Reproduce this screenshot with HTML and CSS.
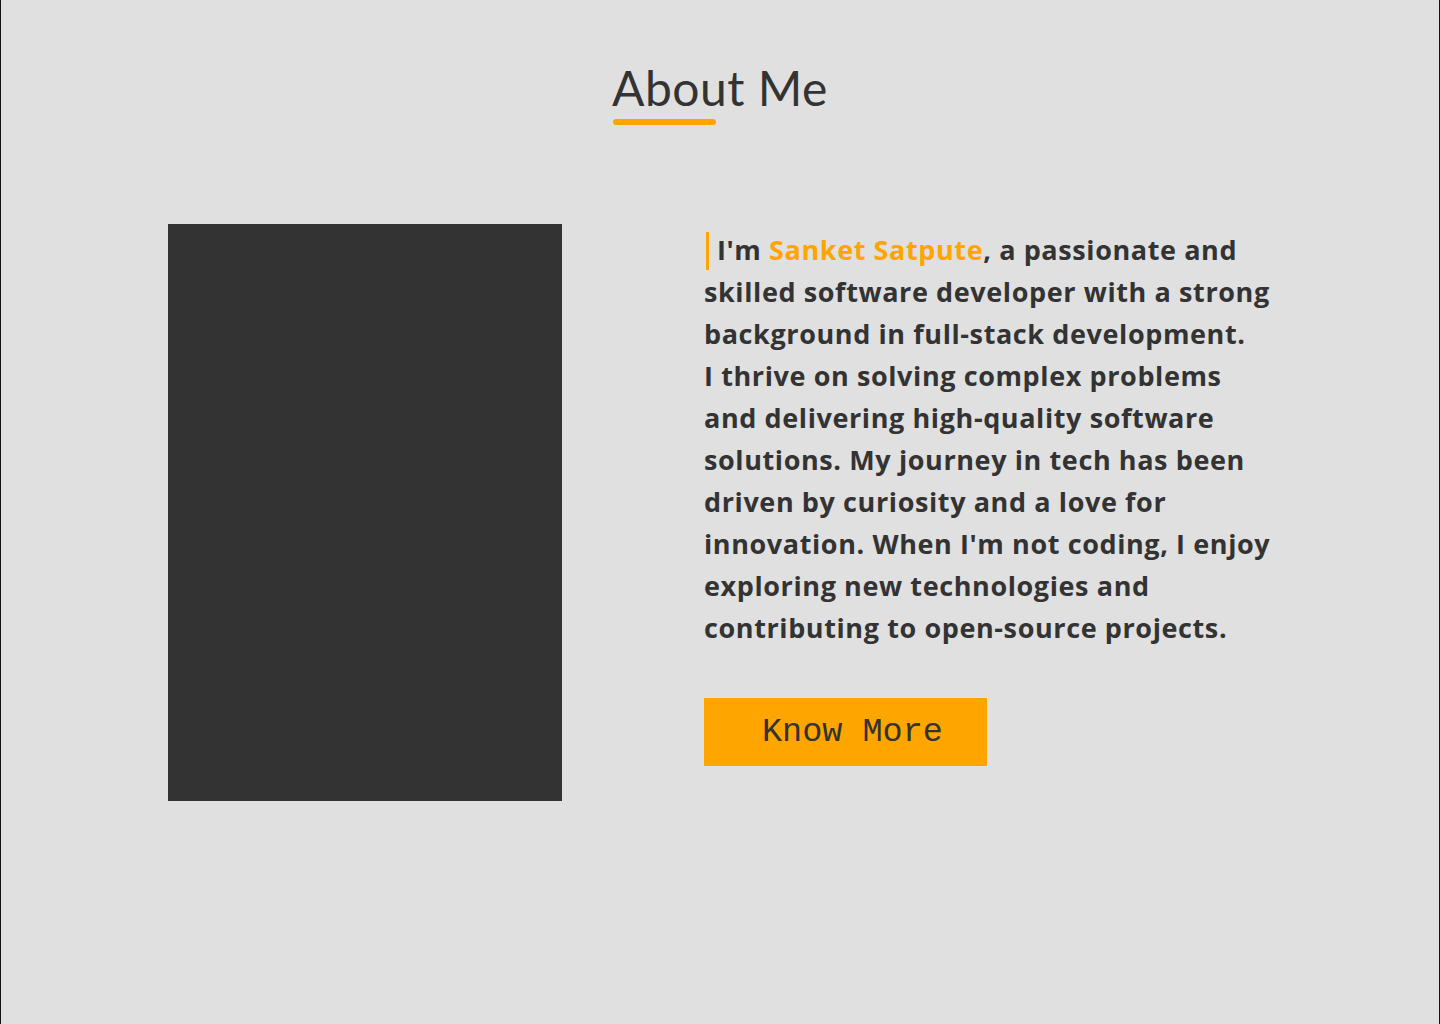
FILE: index.html
```html
<!DOCTYPE html>
<html lang="en">
<head>
<meta charset="utf-8">
<title>About Me</title>
<link rel="stylesheet" href="styles.css">
</head>
<body>
<section class="about">
  <header class="about-head">
    <h1 class="about-title">About Me</h1>
    <span class="about-rule"></span>
  </header>
  <div class="about-body">
    <div class="about-photo"></div>
    <div class="about-text">
      <p class="about-para"><span class="caret"></span>I'm <span class="name">Sanket Satpute</span>, a passionate and<br>skilled software developer with a strong<br>background in full-stack development.<br>I thrive on solving complex problems<br>and delivering high-quality software<br>solutions. My journey in tech has been<br>driven by curiosity and a love for<br>innovation. When I'm not coding, I enjoy<br>exploring new technologies and<br>contributing to open-source projects.</p>
      <a class="know-more" href="#">Know More</a>
    </div>
  </div>
</section>
</body>
</html>
```
FILE: styles.css
```css
html, body {
  margin: 0;
  padding: 0;
  background: #e0e0e0;
}
.about {
  box-sizing: border-box;
  min-height: 1024px;
  border-left: 1px solid #111;
  border-right: 1px solid #111;
  background: #e0e0e0;
  padding-top: 60px;
}
.about-head {
  display: flex;
  flex-direction: column;
  align-items: center;
}
.about-title {
  margin: 0;
  font-family: "Lato", "Open Sans", sans-serif;
  font-weight: 400;
  font-size: 48px;
  line-height: 56px;
  color: #333;
  letter-spacing: 0.5px;
}
.about-rule {
  display: block;
  width: 103px;
  height: 6px;
  border-radius: 3px;
  background: #ffa500;
  margin-top: 3px;
  margin-right: 111px;
}
.about-body {
  display: flex;
  align-items: flex-start;
  padding-left: 167px;
  margin-top: 99px;
  gap: 142px;
}
.about-photo {
  width: 394px;
  height: 577px;
  background: #333;
  flex: none;
}
.about-text {
  padding-top: 5px;
}
.about-para {
  margin: 0;
  font-family: "Open Sans", sans-serif;
  font-weight: 700;
  font-size: 27px;
  line-height: 42px;
  letter-spacing: 0.6px;
  color: #333;
  white-space: nowrap;
}
.caret {
  display: inline-block;
  width: 3px;
  height: 38px;
  background: #ffa500;
  vertical-align: -10px;
  margin-left: 2px;
  margin-right: 8px;
}
.name {
  color: #ffa500;
}
.know-more {
  display: block;
  box-sizing: border-box;
  width: 283px;
  height: 68px;
  margin-top: 49px;
  padding-left: 58px;
  background: #ffa500;
  color: #333;
  text-decoration: none;
  font-family: "Liberation Mono", monospace;
  font-size: 33.5px;
  line-height: 68px;
}
```
